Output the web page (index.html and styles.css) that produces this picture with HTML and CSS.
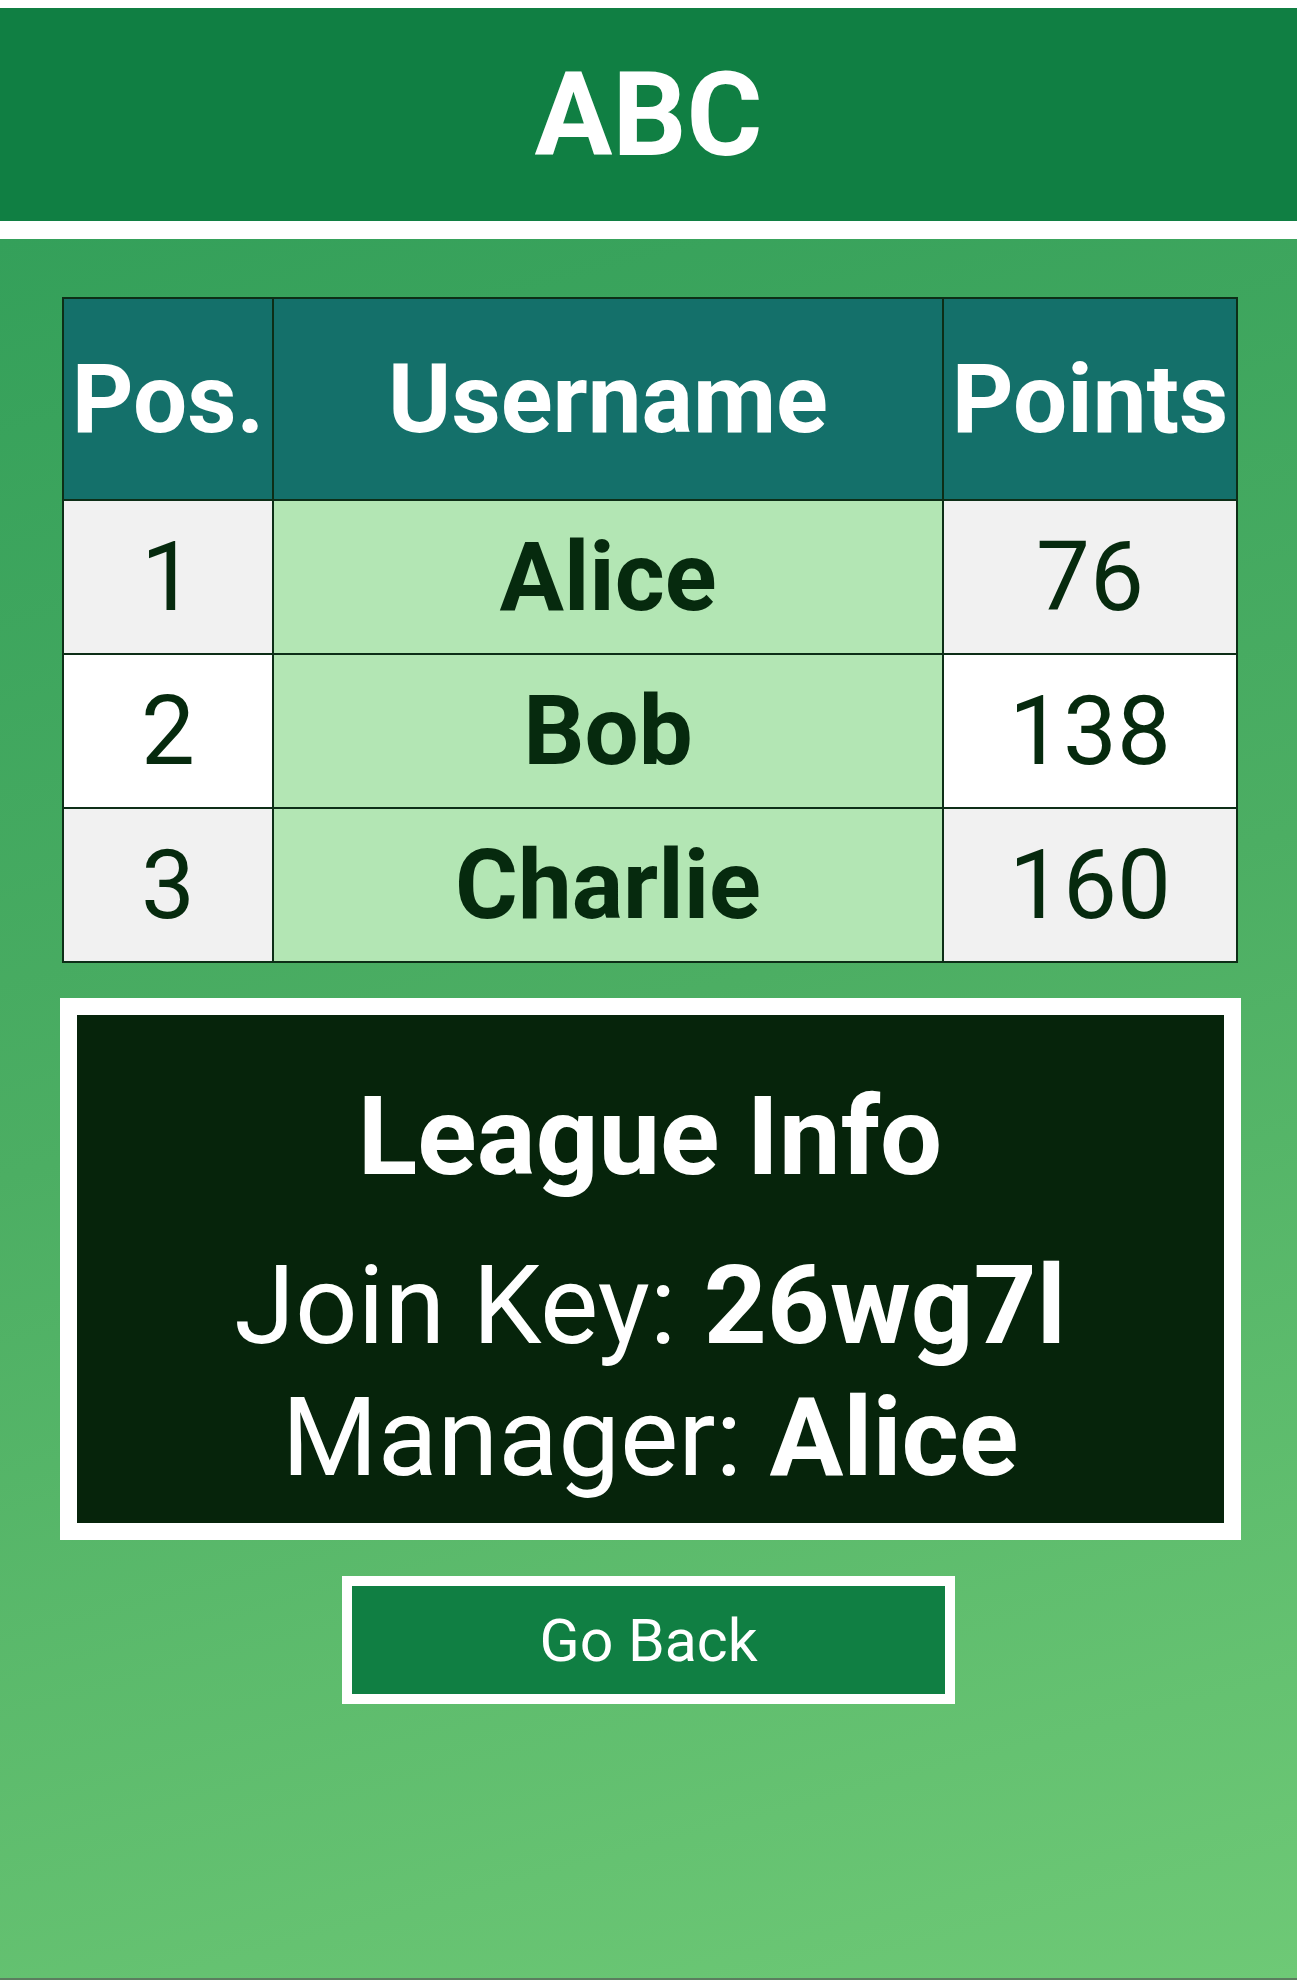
FILE: index.html
```html
<!DOCTYPE html>
<html lang="en">
<head>
<meta charset="utf-8">
<title>ABC</title>
<link rel="stylesheet" href="styles.css">
</head>
<body>
<header class="topbar">
  <h1 class="title">ABC</h1>
</header>
<main class="page">
  <table class="standings">
    <colgroup>
      <col class="col-pos">
      <col class="col-user">
      <col class="col-points">
    </colgroup>
    <thead>
      <tr class="head-row">
        <th>Pos.</th>
        <th>Username</th>
        <th>Points</th>
      </tr>
    </thead>
    <tbody>
      <tr class="row odd">
        <td class="pos">1</td>
        <td class="user">Alice</td>
        <td class="pts">76</td>
      </tr>
      <tr class="row even">
        <td class="pos">2</td>
        <td class="user">Bob</td>
        <td class="pts">138</td>
      </tr>
      <tr class="row odd">
        <td class="pos">3</td>
        <td class="user">Charlie</td>
        <td class="pts">160</td>
      </tr>
    </tbody>
  </table>

  <section class="info">
    <h2 class="info-title">League Info</h2>
    <p class="info-text">Join Key: <strong>26wg7l</strong><br>Manager: <strong>Alice</strong></p>
  </section>

  <button class="back" type="button">Go Back</button>
</main>
</body>
</html>
```

FILE: styles.css
```css
html, body {
  margin: 0;
  padding: 0;
}

body {
  background: #ffffff;
  padding-top: 8px;
  font-family: Roboto, "Liberation Sans", Arial, sans-serif;
}

.topbar {
  height: 213px;
  background: #107f43;
  margin-bottom: 18px;
  display: flex;
  align-items: center;
  justify-content: center;
}

.title {
  margin: 0;
  color: #ffffff;
  font-size: 116px;
  font-weight: 700;
  line-height: 1;
}

.page {
  height: 1741px;
  box-sizing: border-box;
  border-bottom: 2px solid #5b7d5f;
  background: linear-gradient(165deg, #34a05a 0%, #4cae63 45%, #6ec976 100%);
  display: flex;
  flex-direction: column;
  align-items: center;
  padding-top: 58px;
}

.standings {
  width: 1174px;
  margin-left: 3px;
  border-collapse: collapse;
  table-layout: fixed;
  border: 2px solid #0d2e17;
}

.col-pos { width: 210px; }
.col-user { width: 670px; }
.col-points { width: 294px; }

.standings th,
.standings td {
  border: 2px solid #0d2e17;
  padding: 0;
  text-align: center;
  font-size: 96px;
  line-height: 1.17;
  color: #062a0e;
}

.head-row {
  height: 202px;
}

.head-row th {
  background: #14706a;
  color: #ffffff;
  font-weight: 700;
  white-space: nowrap;
}

.row {
  height: 154px;
}

.row .pos,
.row .pts {
  font-weight: 400;
}

.row.odd .pos,
.row.odd .pts {
  background: #f1f1f1;
}

.row.even .pos,
.row.even .pts {
  background: #ffffff;
}

.row .user {
  background: #b3e6b4;
  font-weight: 700;
}

.info {
  margin-top: 35px;
  margin-left: 3px;
  width: 1181px;
  box-sizing: border-box;
  border: 17px solid #ffffff;
  background: #06240b;
  color: #ffffff;
  text-align: center;
  padding: 56px 0 19px;
}

.info-title {
  margin: 0 0 37px;
  font-size: 110px;
  font-weight: 700;
  line-height: 132px;
}

.info-text {
  margin: 0;
  font-size: 110px;
  font-weight: 400;
  line-height: 132px;
}

.info-text strong {
  font-weight: 700;
}

.back {
  margin-top: 36px;
  width: 613px;
  height: 128px;
  box-sizing: border-box;
  border: 10px solid #ffffff;
  background: #107f43;
  color: #ffffff;
  font-family: Roboto, "Liberation Sans", Arial, sans-serif;
  font-size: 59px;
  font-weight: 400;
  padding: 0;
  cursor: pointer;
}
```
